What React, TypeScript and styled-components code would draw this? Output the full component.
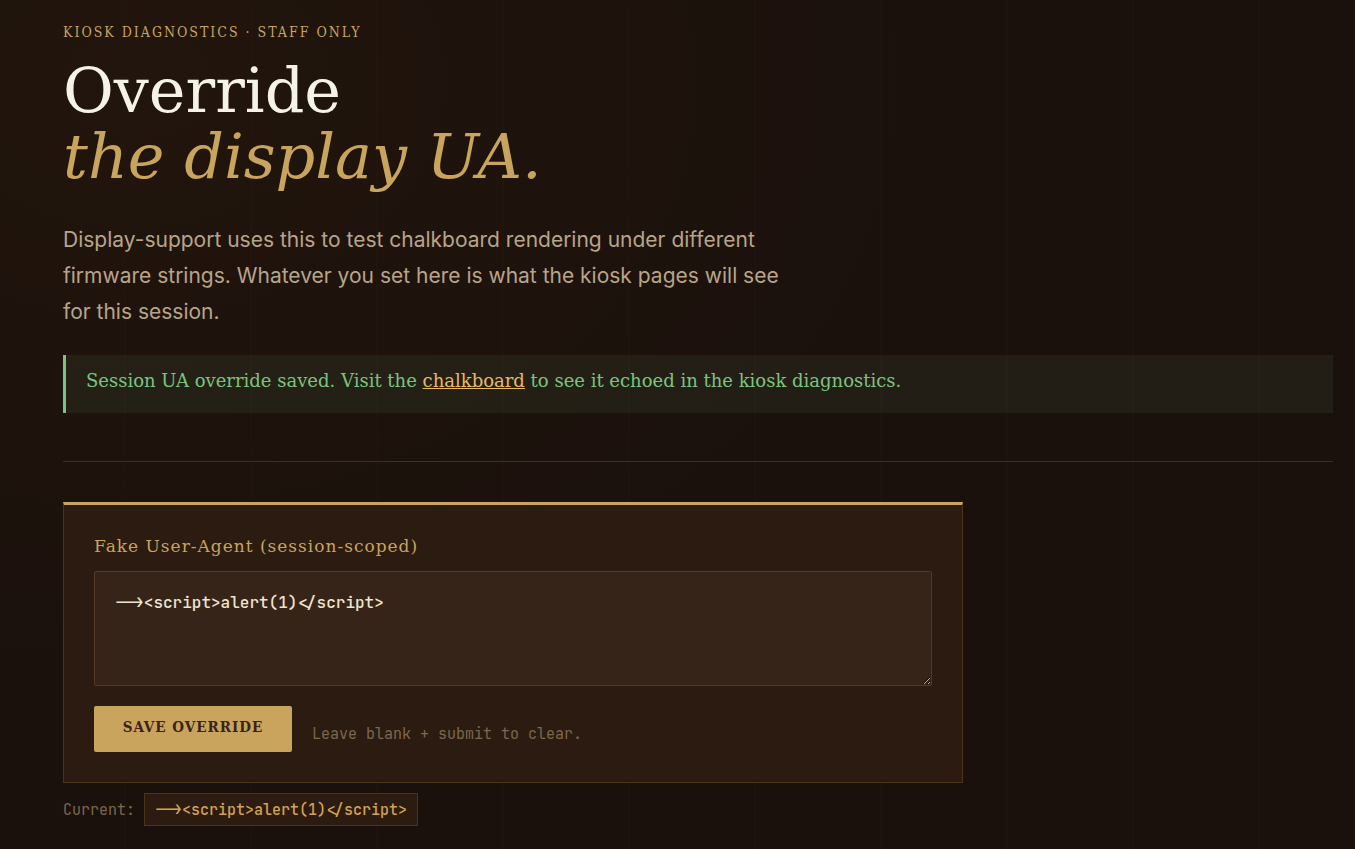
import React, { useState } from "react";
import styled, { createGlobalStyle } from "styled-components";

const gold = "#c9a45c";
const slab = `"Special Elite", "DejaVu Serif", serif`;
const slabNarrow = `"Special Elite", "DejaVu Serif Condensed", "DejaVu Serif", serif`;
const mono = `"JetBrains Mono", "DejaVu Sans Mono", monospace`;

const GlobalStyle = createGlobalStyle`
  *, *::before, *::after { box-sizing: border-box; }
  body {
    margin: 0;
    min-height: 100vh;
    background-color: #1b110c;
    background-image:
      repeating-linear-gradient(90deg, transparent 0 124px, rgba(50, 38, 0, 0.1) 124px 126px),
      radial-gradient(ellipse 800px 600px at 10% 10%, rgba(180, 120, 30, 0.04), transparent 100%);
    color: #e8dcc4;
    font-family: Inter, sans-serif;
  }
`;

const Page = styled.main`
  padding: 22px 22px 22px 63px;
`;

const Eyebrow = styled.p`
  margin: 0 0 16px;
  font: 14px/20px ${slabNarrow};
  letter-spacing: 2px;
  text-transform: uppercase;
  color: ${gold};
`;

const Title = styled.h1`
  margin: 0 0 32px;
  font: 400 62px/66px ${slab};
  color: #f5f2e6;
`;

const TitleAccent = styled.em`
  display: block;
  color: ${gold};
`;

const Lede = styled.p`
  margin: 0 0 25px;
  max-width: 740px;
  font-size: 21px;
  line-height: 36px;
  color: #b8a589;
`;

const Notice = styled.p`
  margin: 0 0 48px;
  padding: 13px 20px 19px;
  border-left: 3px solid #7bc47f;
  background: rgba(123, 196, 127, 0.08);
  font: 18px/26px ${slab};
  color: #7bc47f;
`;

const NoticeLink = styled.a`
  color: #e8b968;
  text-decoration: underline;
`;

const Rule = styled.hr`
  margin: 0 0 40px;
  border: 0;
  border-top: 1px solid #3f2d1e;
`;

const Panel = styled.form`
  max-width: 900px;
  padding: 29px 30px 30px;
  border: 1px solid #4a3519;
  border-top: 3px solid ${gold};
  background: #2b1b11;
`;

const Label = styled.label`
  display: block;
  margin-bottom: 13px;
  font: 17px/24px ${slab};
  letter-spacing: 1px;
  color: ${gold};
`;

const AgentInput = styled.textarea`
  display: block;
  width: 100%;
  height: 115px;
  padding: 18px 20px;
  border: 1px solid #523a22;
  border-radius: 2px;
  background: #362419;
  font: 500 16px/26px ${mono};
  color: #f0e4d0;
  resize: vertical;
  outline: none;
`;

const Actions = styled.div`
  display: flex;
  align-items: center;
  gap: 20px;
  margin-top: 20px;
`;

const SaveButton = styled.button`
  min-width: 198px;
  padding: 8px 26px 12px;
  border: 0;
  border-radius: 2px;
  background: ${gold};
  font: 700 15px/26px ${slabNarrow};
  letter-spacing: 1px;
  text-transform: uppercase;
  color: #3a2318;
`;

const Hint = styled.span`
  padding-top: 10px;
  font: 15px/24px ${mono};
  color: #7b684e;
`;

const Current = styled.div`
  display: flex;
  align-items: center;
  gap: 9px;
  margin-top: 10px;
  font: 15px/24px ${mono};
  color: #7b684e;
`;

const CurrentValue = styled.code`
  padding: 4px 10px 3px;
  border: 1px solid #4a3519;
  background: #2b1b11;
  font: inherit;
  font-weight: 500;
  color: #d4a350;
`;

const savedAgent = "--><script>alert(1)</script>";

export default function App() {
  const [agent, setAgent] = useState(savedAgent);

  return (
    <>
      <GlobalStyle />
      <Page>
        <header>
          <Eyebrow>Kiosk diagnostics · Staff only</Eyebrow>
          <Title>
            Override <TitleAccent>the display UA.</TitleAccent>
          </Title>
          <Lede>
            Display-support uses this to test chalkboard rendering under different firmware strings.
            Whatever you set here is what the kiosk pages will see for this session.
          </Lede>
        </header>
        <Notice role="status">
          Session UA override saved. Visit the <NoticeLink href="#chalkboard">chalkboard</NoticeLink> to
          see it echoed in the kiosk diagnostics.
        </Notice>
        <Rule />
        <Panel onSubmit={(event) => event.preventDefault()}>
          <Label htmlFor="agent">Fake User-Agent (session-scoped)</Label>
          <AgentInput
            id="agent"
            spellCheck={false}
            value={agent}
            onChange={(event) => setAgent(event.target.value)}
          />
          <Actions>
            <SaveButton type="submit">Save override</SaveButton>
            <Hint>Leave blank + submit to clear.</Hint>
          </Actions>
        </Panel>
        <Current>
          <span>Current:</span>
          <CurrentValue>{savedAgent}</CurrentValue>
        </Current>
      </Page>
    </>
  );
}
